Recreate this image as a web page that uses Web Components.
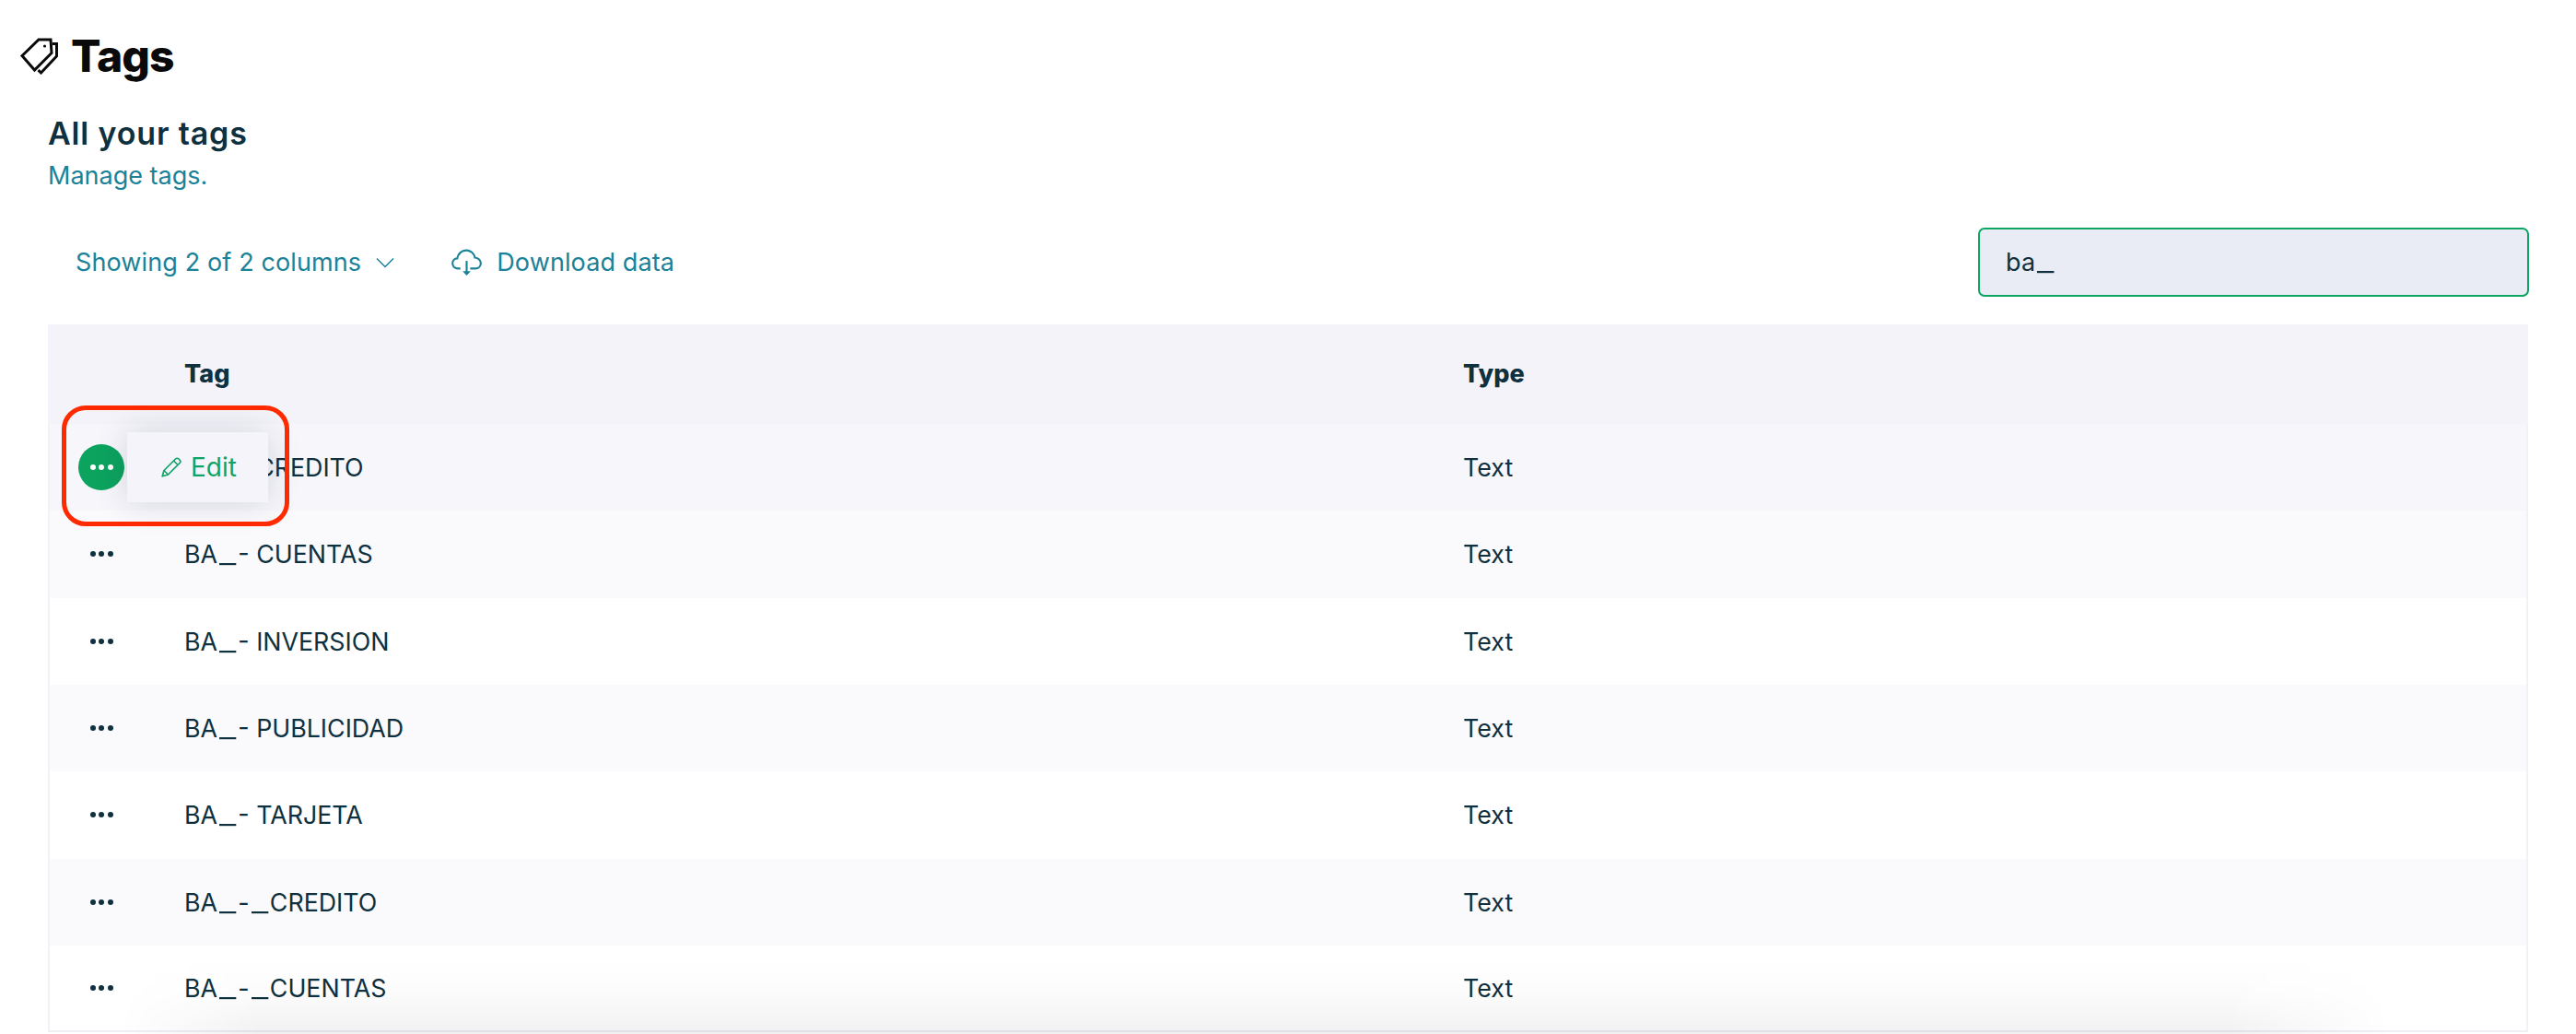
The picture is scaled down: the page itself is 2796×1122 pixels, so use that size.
<!DOCTYPE html>
<html lang="en">
<head>
<meta charset="utf-8">
<title>Tags</title>
<style>
  html, body { margin: 0; background: #fff; height: 1122px; overflow: hidden; }
  body { font-family: "Inter", "Liberation Sans", sans-serif; color: #0f303e; position: relative; }
</style>
</head>
<body>
<tags-page>
  <page-title>Tags</page-title>
  <section-head title="All your tags" subtitle="Manage tags."></section-head>
  <table-toolbar search="ba_"></table-toolbar>
  <tags-table>
    <tag-row name="BA_- CREDITO" type="Text" active></tag-row>
    <tag-row name="BA_- CUENTAS" type="Text"></tag-row>
    <tag-row name="BA_- INVERSION" type="Text"></tag-row>
    <tag-row name="BA_- PUBLICIDAD" type="Text"></tag-row>
    <tag-row name="BA_- TARJETA" type="Text"></tag-row>
    <tag-row name="BA_-_CREDITO" type="Text"></tag-row>
    <tag-row name="BA_-_CUENTAS" type="Text"></tag-row>
  </tags-table>
  <bottom-fade></bottom-fade>
</tags-page>

<script>
// The underscore of the original font is wider than the one in Inter
const wideUnderscore = (text) => text.replace(/_/g, '<span class="us">_</span>');
const underscoreCss = `.us { display: inline-block; margin: 0 5px; transform: scaleX(1.5); }`;

// Page wrapper
class TagsPage extends HTMLElement {
  constructor() {
    super();
    this.attachShadow({ mode: "open" });
  }
  connectedCallback() {
    this.shadowRoot.innerHTML = `
      <style>
        :host { display: block; padding-top: 41px; }
      </style>
      <slot></slot>
    `;
  }
}
customElements.define("tags-page", TagsPage);

// Big title with the tags icon
class PageTitle extends HTMLElement {
  constructor() {
    super();
    this.attachShadow({ mode: "open" });
  }
  connectedCallback() {
    this.shadowRoot.innerHTML = `
      <style>
        :host { display: flex; align-items: center; gap: 14px; padding-left: 22px; height: 40px; }
        svg { width: 41px; height: 40px; flex: none; }
        span { font: 800 48px/40px "Inter", sans-serif; color: #0a0a0a; letter-spacing: -1px; }
      </style>
      <svg viewBox="0 0 41 40" fill="none" stroke="#0a0a0a" stroke-width="3">
        <path d="M2 19.500 20 2h13l1 14.500L15.500 35z" stroke-linejoin="miter"/>
        <circle cx="26.500" cy="9" r="1.600" fill="#0a0a0a" stroke="none"/>
        <path d="M35 6.500h4.500V20L22.500 38l-3-2.800"/>
      </svg>
      <span><slot></slot></span>
    `;
  }
}
customElements.define("page-title", PageTitle);

// Section heading
class SectionHead extends HTMLElement {
  constructor() {
    super();
    this.attachShadow({ mode: "open" });
  }
  connectedCallback() {
    this.shadowRoot.innerHTML = `
      <style>
        :host { display: block; padding: 44px 0 0 52px; }
        h2 { margin: 0; font: 600 34px/40px "Inter", sans-serif; letter-spacing: .85px; color: #0f303e; }
        p { margin: 10px 0 0; font: 400 27px/32px "Inter", sans-serif; color: #1a8299; }
      </style>
      <h2>${this.getAttribute("title")}</h2>
      <p>${this.getAttribute("subtitle")}</p>
    `;
  }
}
customElements.define("section-head", SectionHead);

// Toolbar: columns, download and search
class TableToolbar extends HTMLElement {
  constructor() {
    super();
    this.attachShadow({ mode: "open" });
  }
  connectedCallback() {
    this.shadowRoot.innerHTML = `
      <style>
        :host { display: flex; align-items: center; height: 75px; margin-top: 40px; padding: 0 51px 0 82px; color: #1a8299; font: 400 27px/32px "Inter", sans-serif; letter-spacing: .12px; }
        .btn { display: flex; align-items: center; }
        .chev { width: 20px; height: 12px; margin-left: 16px; }
        .cloud { width: 33px; height: 30px; margin: 0 16px 0 62px; }
        .search { margin-left: auto; box-sizing: border-box; width: 598px; height: 75px; padding: 0 28px; display: flex; align-items: center; background: #e9ecf5; border: 2px solid #0ca562; border-radius: 7px; color: #0f303e; font-size: 27px; }
        ${underscoreCss}
      </style>
      <span class="btn">Showing 2 of 2 columns
        <svg class="chev" viewBox="0 0 20 12" fill="none" stroke="currentColor" stroke-width="1.500"><path d="M1 1.500 10 10.500 19 1.500"/></svg>
      </span>
      <span class="btn">
        <svg class="cloud" viewBox="0 0 34 30" fill="none" stroke="currentColor" stroke-width="2.200">
          <path d="M10 21.500H7.500C3.500 21.500 1.200 18.800 1.200 15.800c0-3 2.300-5.300 5.300-5.500C7.200 5 11.500 1.200 16.500 1.200c4.800 0 8.800 3.300 9.700 8.100 3.800.2 6.600 3 6.600 6.400 0 3.300-2.600 5.800-6 5.800H21"/>
          <path d="M17 13v14"/>
          <path d="M12.500 24.500h9L17 29.500z" fill="currentColor" stroke="none"/>
        </svg>Download data
      </span>
      <span class="search"><span>${wideUnderscore(this.getAttribute("search"))}</span></span>
    `;
  }
}
customElements.define("table-toolbar", TableToolbar);

// Table with its header; rows come through the slot
class TagsTable extends HTMLElement {
  constructor() {
    super();
    this.attachShadow({ mode: "open" });
  }
  connectedCallback() {
    this.shadowRoot.innerHTML = `
      <style>
        :host { display: block; margin: 30px 52px 0; }
        .head { display: grid; grid-template-columns: 148px 1388px 1fr; align-items: center; height: 108px; background: #f3f3f9; font: 800 27px/32px "Inter", sans-serif; color: #0f303e; }
      </style>
      <div class="head"><span></span><span>Tag</span><span>Type</span></div>
      <slot></slot>
    `;
  }
}
customElements.define("tags-table", TagsTable);

// One row; the "active" one shows the open actions menu
class TagRow extends HTMLElement {
  constructor() {
    super();
    this.attachShadow({ mode: "open" });
  }
  connectedCallback() {
    const active = this.hasAttribute("active");
    const menu = active ? `
      <div class="menu">
        <svg viewBox="0 0 22 22" fill="none" stroke="currentColor" stroke-width="1.700" stroke-linejoin="round">
          <path d="M1.200 20.800 3 14.500 15.500 2c1-1 2.500-1 3.500 0l1 1c1 1 1 2.500 0 3.500L7.500 19z"/>
          <path d="M3 14.500 7.500 19M13.500 4l4.500 4.500"/>
        </svg>Edit
      </div>
      <div class="mark"></div>` : "";
    this.shadowRoot.innerHTML = `
      <style>
        :host { display: grid; position: relative; grid-template-columns: 146px 1388px 1fr; align-items: center; box-sizing: border-box; height: 94.33px; border: solid #f1f1f8; border-width: 0 2px; background: #fff; font: 400 26.800px/32px "Inter", sans-serif; color: #0f303e; }
        :host(:nth-of-type(even)) { background: #fafafd; }
        :host(:last-of-type) { border-bottom: 2px solid #eeeef3; }
        :host([active]) { background: #f6f6fb; z-index: 2; }
        .dots { justify-self: start; width: 50px; height: 50px; margin-left: 31px; border-radius: 50%; display: flex; align-items: center; justify-content: center; gap: 3.500px; }
        .dots i { width: 6px; height: 6px; border-radius: 50%; background: #0f303e; }
        :host([active]) .dots { background: #0ca35f; }
        :host([active]) .dots i { background: #fff; }
        .menu { position: absolute; left: 84px; top: 9px; width: 153px; height: 76px; box-sizing: border-box; padding-left: 37px; display: flex; align-items: center; gap: 10px; background: #f4f4fa; color: #0ea466; font-size: 28px; box-shadow: 0 0 36px rgba(30, 30, 60, .16); }
        .menu svg { width: 22px; height: 22px; }
        .mark { position: absolute; left: 13px; top: -20px; width: 247px; height: 131px; box-sizing: border-box; border: 5px solid #ff2a00; border-radius: 26px; }
        ${underscoreCss}
      </style>
      <span class="dots"><i></i><i></i><i></i></span>
      <span>${wideUnderscore(this.getAttribute("name"))}</span>
      <span>${this.getAttribute("type")}</span>
      ${menu}
    `;
  }
}
customElements.define("tag-row", TagRow);

// Soft shadow from the footer that sits just below the window
class BottomFade extends HTMLElement {
  constructor() {
    super();
    this.attachShadow({ mode: "open" });
  }
  connectedCallback() {
    this.shadowRoot.innerHTML = `
      <style>
        :host { display: block; position: absolute; left: 130px; right: 200px; bottom: 0; height: 84px; pointer-events: none; z-index: 3;
          background: linear-gradient(to bottom, rgba(0,0,0,0), rgba(0,0,0,.012) 45%, rgba(0,0,0,.055));
          -webkit-mask-image: linear-gradient(to right, transparent, #000 150px, #000 calc(100% - 180px), transparent); }
      </style>
    `;
  }
}
customElements.define("bottom-fade", BottomFade);
</script>
</body>
</html>
